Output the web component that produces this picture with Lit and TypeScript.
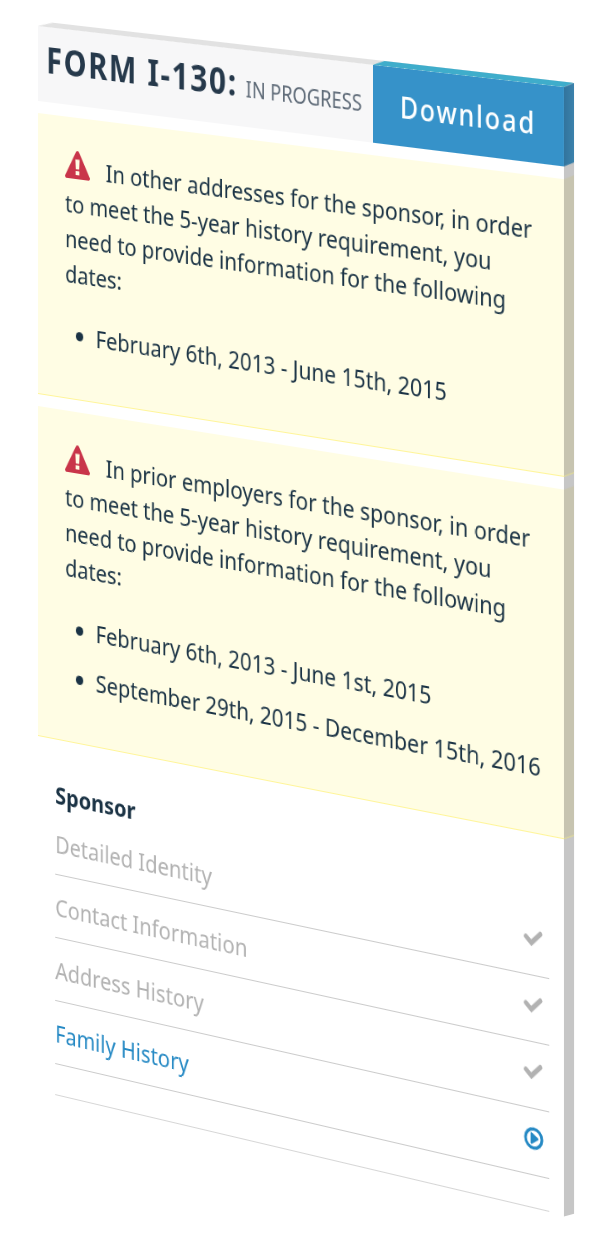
import { LitElement, html, css, svg } from "lit";
import { customElement, property } from "lit/decorators.js";
import { classMap } from "lit/directives/class-map.js";

type Status = "done" | "current";

interface Step {
  label: string;
  status: Status;
}

interface Notice {
  subject: string;
  ranges: string[];
}

const NOTICES: Notice[] = [
  {
    subject: "other addresses",
    ranges: ["February 6th, 2013 - June 15th, 2015"],
  },
  {
    subject: "prior employers",
    ranges: [
      "February 6th, 2013 - June 1st, 2015",
      "September 29th, 2015 - December 15th, 2016",
    ],
  },
];

const STEPS: Step[] = [
  { label: "Detailed Identity", status: "done" },
  { label: "Contact Information", status: "done" },
  { label: "Address History", status: "done" },
  { label: "Family History", status: "current" },
];

const checkIcon = svg`<path fill="none" stroke="currentColor" stroke-width="4.6" stroke-linecap="round" d="M3.400 9.700 9.400 15 19.200 5.300"/>`;

const playIcon = svg`<circle cx="12" cy="11" r="9" fill="none" stroke="currentColor" stroke-width="3"/><path fill="currentColor" d="M8.6 6.200c0-.7.6-1.100 1.200-.8l7 4.700c.6.4.6 1.200 0 1.600l-7 4.700c-.6.3-1.200 0-1.200-.8z"/>`;

@customElement("history-notice")
class HistoryNotice extends LitElement {
  @property() subject = "";
  @property({ attribute: false }) ranges: string[] = [];

  static styles = css`
    :host {
      display: block;
      position: relative;
      padding: 33px 20px 46px 33px;
      background: #fffde4;
      border-bottom: 1px solid #fff59a;
    }
    :host::after {
      content: "";
      position: absolute;
      top: 0;
      bottom: -1px;
      left: 100%;
      width: 11px;
      background: #c7c4b0;
      border-bottom: 1px solid #e3dc96;
      box-sizing: border-box;
      transform: skewY(-24deg);
      transform-origin: left;
    }
    .message {
      margin: 0;
    }
    .warning {
      width: 30px;
      height: 28px;
      margin-right: 19px;
      vertical-align: -1px;
      color: #c9354a;
    }
    .ranges {
      display: grid;
      gap: 14px;
      margin: 26px 0 0;
      padding: 0 0 0 37px;
    }
  `;

  render() {
    return html`
      <p class="message">
        <svg class="warning" viewBox="0 0 30 28" aria-hidden="true">
          <path
            fill="currentColor"
            fill-rule="evenodd"
            d="M16.800 1.100 29.700 24.900c.9 1.500-.1 3.100-1.800 3.100H2.100C.4 28-.6 26.400.3 24.900L13.200 1.100c.8-1.400 2.800-1.400 3.600 0zM12.400 8.600l.5 9.600h4.200l.5-9.600zM12.700 20v4h4.600v-4z"
          />
        </svg>In ${this.subject} for the sponsor, in order to meet the 5-year
        history requirement, you need to provide information for the following
        dates:
      </p>
      <ul class="ranges">
        ${this.ranges.map((range) => html`<li>${range}</li>`)}
      </ul>
    `;
  }
}

@customElement("app-root")
class AppRoot extends LitElement {
  static styles = css`
    :host {
      display: block;
      overflow: hidden;
      background: #fff;
      color: #1b3345;
      font: 24px/35px "Noto Sans", "Open Sans", sans-serif;
    }
    .stage {
      padding: 26px 0 150px 38px;
      perspective: 6187px;
      perspective-origin: 38px -999px;
    }
    /* The card is turned towards the viewer around its left edge. */
    .card {
      position: relative;
      width: calc(100vw - 1px);
      background: #fff;
      transform: rotateY(-35deg);
      transform-origin: left top;
    }
    .card::after,
    .download::after {
      content: "";
      position: absolute;
      top: 0;
      bottom: 0;
      left: 100%;
      width: 11px;
      background: #c6c6c6;
      transform: skewY(-24deg);
      transform-origin: left;
    }
    .header {
      position: relative;
      display: flex;
      background: #f7f7f8;
    }
    .header::before,
    .download::before {
      content: "";
      position: absolute;
      bottom: 100%;
      left: 0;
      right: -11px;
      height: 5px;
      background: #e2e2e2;
      clip-path: polygon(0 100%, 18px 0, 100% 0, calc(100% - 11px) 100%);
    }
    .title {
      flex: 1;
      margin: 0;
      padding: 10px 0 0 10px;
      font-size: 35px;
      line-height: 45px;
      letter-spacing: 2px;
      white-space: nowrap;
      color: #26394b;
    }
    .state {
      font-size: 21px;
      font-weight: 400;
      letter-spacing: 0;
      color: #5f6b78;
      margin-left: -2px;
    }
    .download {
      position: relative;
      z-index: 1;
      flex: 0 0 212px;
      height: 75px;
      padding: 0;
      border: 0;
      background: #3692c9;
      color: #fff;
      font: inherit;
      font-size: 28px;
      font-weight: 500;
      letter-spacing: 2px;
      cursor: pointer;
    }
    .download::before {
      background: #3fadcb;
      clip-path: polygon(0 100%, 13px 0, 100% 0, calc(100% - 11px) 100%);
    }
    .download::after {
      background: linear-gradient(90deg, #32749d, #3b82ac);
    }
    .notices {
      position: relative;
      z-index: 1;
      display: grid;
      gap: 12px;
      margin-top: 12px;
    }
    .progress {
      padding: 37px 16px 1px 21px;
    }
    .group {
      margin: 0;
      font-size: 24px;
      line-height: 35px;
    }
    .steps {
      margin: 0;
      padding: 0 0 30px;
      list-style: none;
      border-bottom: 1px solid #d6d6d6;
    }
    .step {
      display: flex;
      justify-content: space-between;
      align-items: flex-start;
      padding: 14px 7px 13px 0;
      border-bottom: 1px solid #cbcbcb;
      color: #b2b2b2;
      text-decoration: none;
    }
    .current {
      color: #2589c4;
    }
    .mark {
      width: 22px;
      height: 22px;
      margin-top: 3px;
      overflow: visible;
    }
  `;

  render() {
    return html`
      <div class="stage">
        <main class="card">
          <header class="header">
            <h1 class="title">
              FORM I-130: <span class="state">IN PROGRESS</span>
            </h1>
            <button class="download" type="button">Download</button>
          </header>
          <div class="notices">
            ${NOTICES.map(
              (notice) => html`<history-notice
                .subject=${notice.subject}
                .ranges=${notice.ranges}
              ></history-notice>`
            )}
          </div>
          <section class="progress">
            <h2 class="group">Sponsor</h2>
            <ul class="steps">
              ${STEPS.map(
                (step) => html`<li>
                  <a
                    href="#"
                    class=${classMap({
                      step: true,
                      current: step.status === "current",
                    })}
                  >
                    ${step.label}
                    <svg class="mark" viewBox="0 0 22 22" aria-hidden="true">
                      ${step.status === "done" ? checkIcon : playIcon}
                    </svg>
                  </a>
                </li>`
              )}
            </ul>
          </section>
        </main>
      </div>
    `;
  }
}
